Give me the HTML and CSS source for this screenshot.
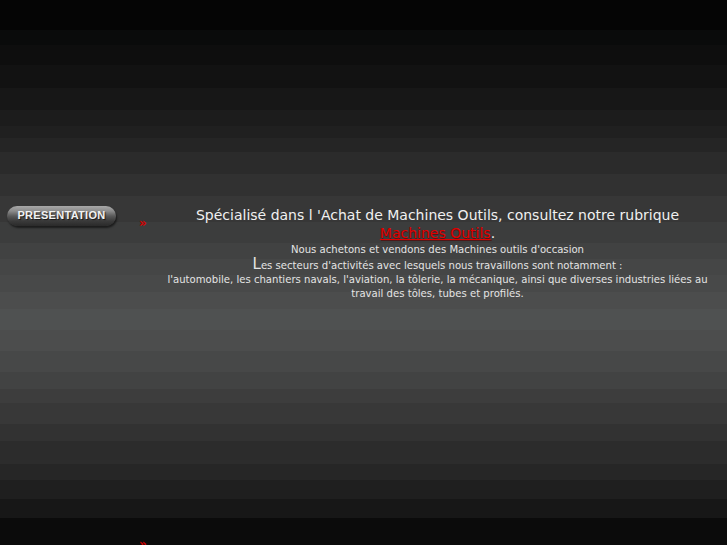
FILE: index.html
```html
<!DOCTYPE html>
<html lang="fr">
<head>
<meta charset="utf-8">
<title>Machines Outils</title>
<link rel="stylesheet" href="styles.css">
</head>
<body>
<div class="page">
  <div class="row">
    <div class="sidebar">
      <a class="btn" href="#">PRESENTATION</a>
    </div>
    <div class="arrow">&raquo;</div>
    <div class="content">
      <p class="lead">Spécialisé dans l 'Achat de Machines Outils, consultez notre rubrique<br><a class="red" href="#">Machines Outils</a>.</p>
      <p class="small first">Nous achetons et vendons des Machines outils d'occasion</p>
      <p class="small"><span class="big">L</span>es secteurs d'activités avec lesquels nous travaillons sont notamment :</p>
      <p class="small">l'automobile, les chantiers navals, l'aviation, la tôlerie, la mécanique, ainsi que diverses industries liées au travail des tôles, tubes et profilés.</p>
    </div>
  </div>
  <div class="row2">
    <div class="arrow2">&raquo;</div>
  </div>
</div>
</body>
</html>
```
FILE: styles.css
```css
html, body {
  margin: 0;
  padding: 0;
}
body {
  width: 727px;
  height: 545px;
  overflow: hidden;
  font-family: "DejaVu Sans", Verdana, sans-serif;
  color: #e8e8e8;
  background: linear-gradient(to bottom,
    #050505 0px, #050505 30px,
    #0a0b0b 30px, #0a0b0b 45px,
    #0e0e0e 45px, #0e0e0e 65px,
    #121212 65px, #121212 88px,
    #171717 88px, #171717 110px,
    #1c1c1c 110px, #1c1c1c 126px,
    #202020 126px, #202020 138px,
    #252525 138px, #252525 152px,
    #2b2b2b 152px, #2b2b2b 174px,
    #313131 174px, #313131 196px,
    #373737 196px, #373737 222px,
    #3c3d3d 222px, #3c3d3d 243px,
    #414242 243px, #414242 259px,
    #454646 259px, #454646 275px,
    #484949 275px, #484949 292px,
    #4c4d4d 292px, #4c4d4d 309px,
    #4f5151 309px, #4f5151 330px,
    #4c4d4d 330px, #4c4d4d 351px,
    #474848 351px, #474848 372px,
    #424343 372px, #424343 389px,
    #3d3d3d 389px, #3d3d3d 403px,
    #383838 403px, #383838 424px,
    #323232 424px, #323232 441px,
    #2c2c2c 441px, #2c2c2c 464px,
    #262626 464px, #262626 480px,
    #1f1f1f 480px, #1f1f1f 499px,
    #171717 499px, #171717 518px,
    #0b0b0b 518px, #0b0b0b 545px);
}
.page {
  padding-top: 206px;
}
.row {
  display: flex;
  align-items: flex-start;
}
.sidebar {
  width: 139px;
  flex: none;
}
.btn {
  display: block;
  margin-left: 7px;
  width: 109px;
  height: 20px;
  border-radius: 10px;
  background: linear-gradient(to bottom, #a8a8a8 0%, #8c8c8c 25%, #5a5a5a 50%, #3a3a3a 75%, #2a2a2a 100%);
  box-shadow: 1px 2px 2px rgba(0,0,0,0.55);
  color: #f2f2f2;
  font-family: "Liberation Sans", Arial, sans-serif;
  font-weight: bold;
  font-size: 11px;
  line-height: 18px;
  text-align: center;
  text-decoration: none;
  text-shadow: 1px 1px 1px rgba(0,0,0,0.7);
  letter-spacing: 0.3px;
}
.arrow {
  width: 9px;
  flex: none;
  color: #d40000;
  font-size: 12px;
  line-height: 12px;
  margin-top: 11px;
  font-family: "DejaVu Sans", sans-serif;
  font-weight: bold;
}
.content {
  flex: 1;
  text-align: center;
  padding: 0 10px 0 10px;
}
.content p {
  margin: 0;
}
.lead {
  font-size: 14px;
  line-height: 18px;
  color: #f0f0f0;
}
.red {
  color: #e00000;
  text-decoration: underline;
  text-shadow: 1px 1px 0 rgba(90,0,0,0.6);
}
.small {
  font-size: 10.1px;
  line-height: 14px;
  color: #e4e4e4;
}
.first {
  padding-top: 1px;
}
.big {
  font-size: 15px;
  line-height: 14px;
}
.row2 {
  padding-left: 139px;
  margin-top: 237px;
}
.arrow2 {
  color: #d40000;
  font-size: 12px;
  line-height: 12px;
  font-weight: bold;
}
```
